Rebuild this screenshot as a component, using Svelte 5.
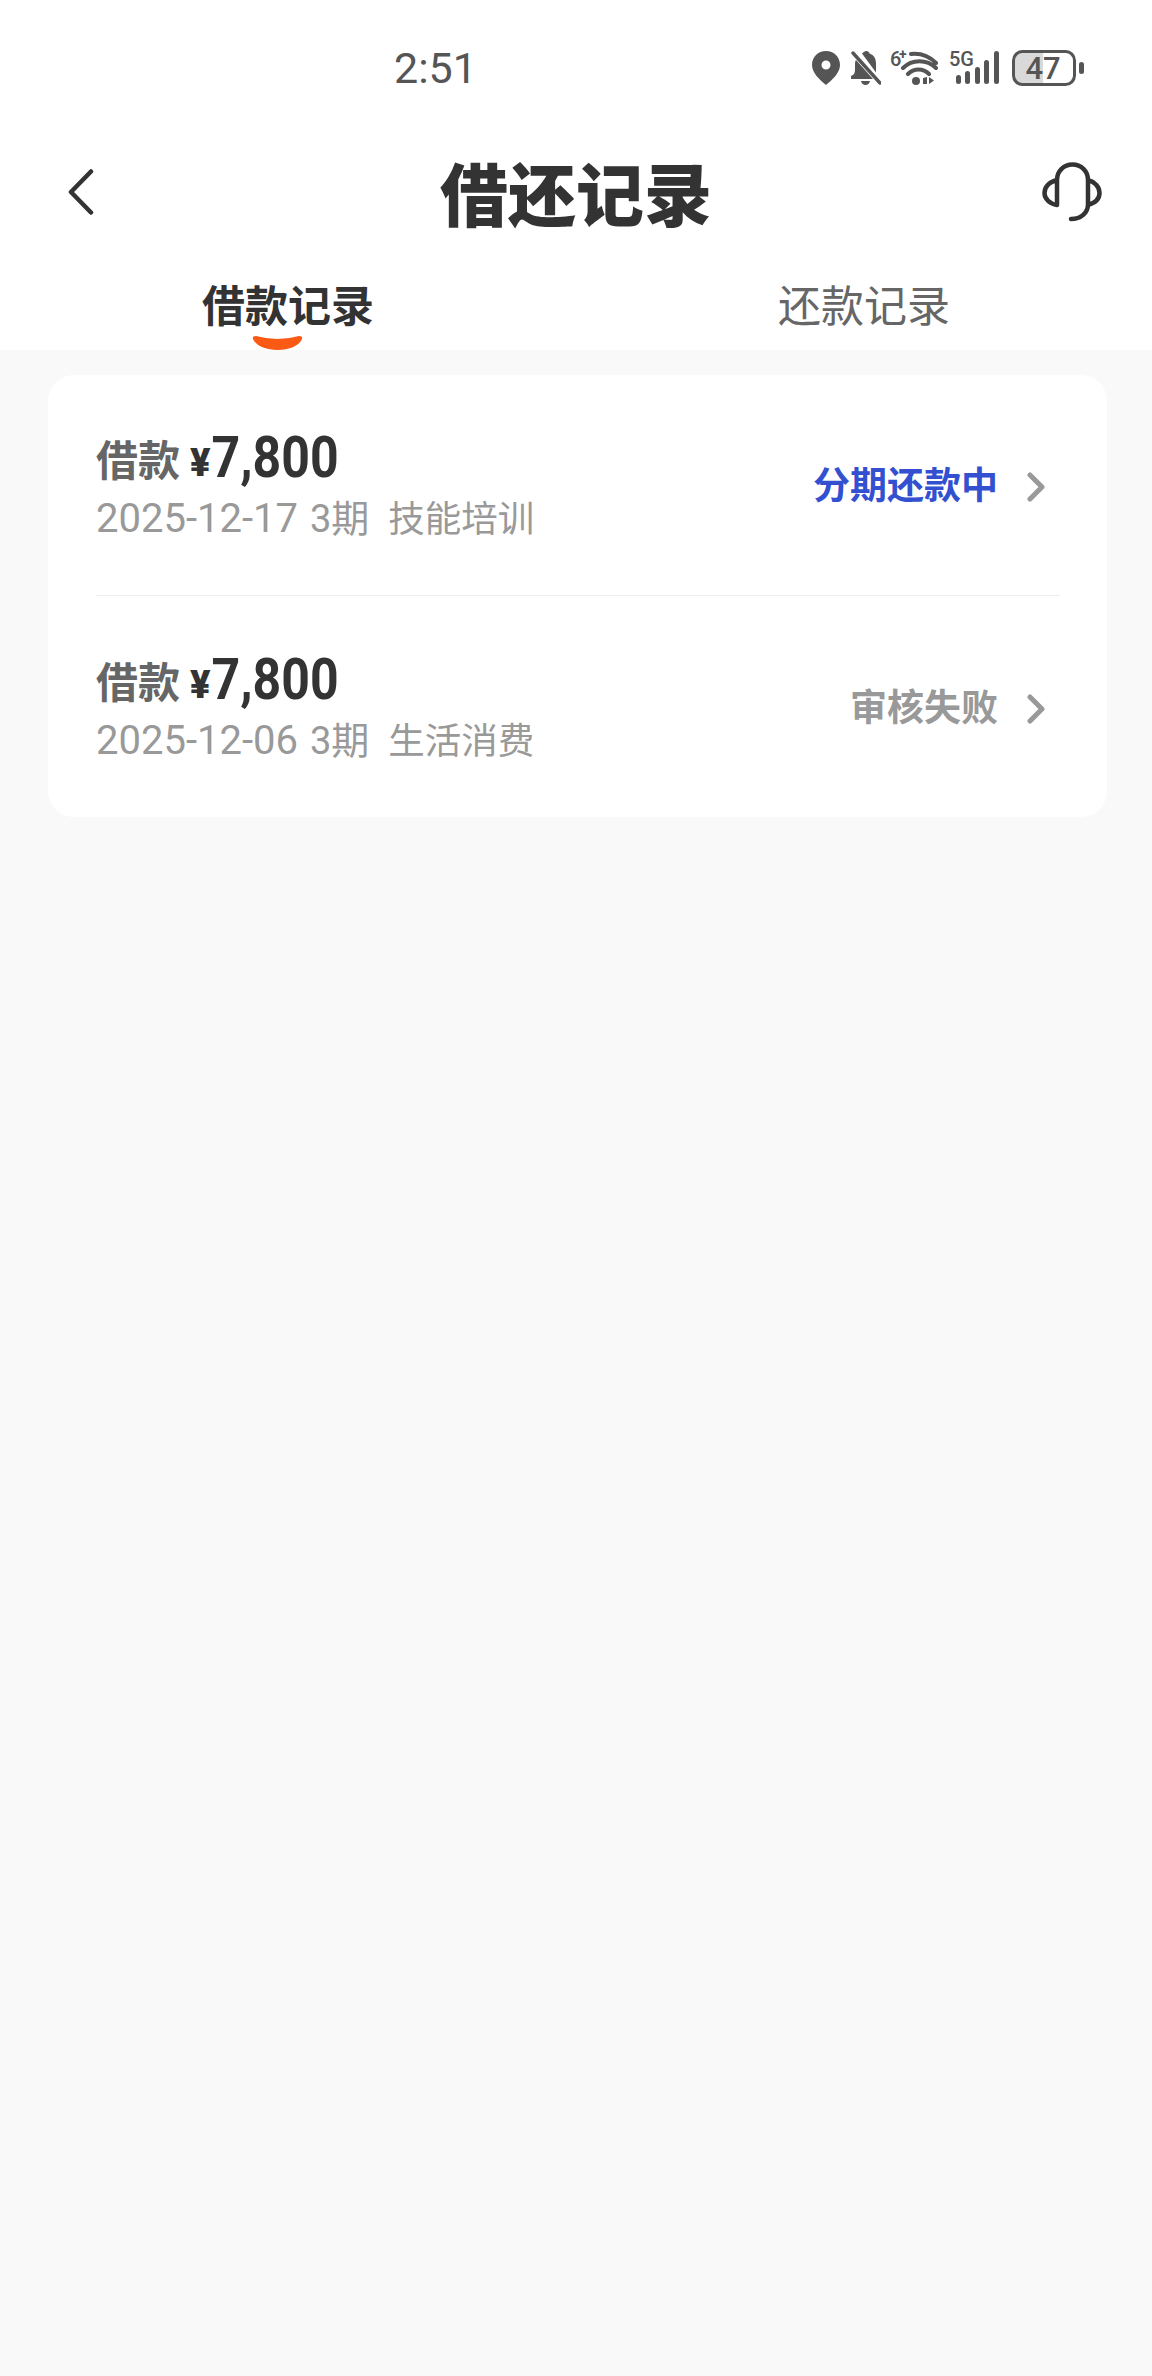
<script>
    const records = [
        { date: "2025-12-17", period: "3期", purpose: "技能培训", status: "分期还款中", active: true },
        { date: "2025-12-06", period: "3期", purpose: "生活消费", status: "审核失败", active: false }
    ];
</script>

<div class="page">
    <header class="top">
        <div class="status-bar">
            <span class="time">2:51</span>
            <div class="status-icons">
                <svg class="ic-pin" viewBox="0 0 28 36" aria-hidden="true">
                    <path fill-rule="evenodd" d="M14 1C6 1 0 7 0 15c0 8 8 15 14 20 6-5 14-12 14-20C28 7 22 1 14 1Zm0 9.500a4.500 4.500 0 1 1 0 9 4.500 4.500 0 0 1 0-9Z" />
                </svg>
                <svg class="ic-bell" viewBox="0 0 30 36" aria-hidden="true">
                    <path d="M5 10 22 29H0v-3c3-1 4-3 4-7v-5c0-2 .3-3 1-4Z" />
                    <path d="M11 3.500c1-1 2.500-2.500 4.500-2.500 1.500 0 2.500 1 3 2.500 4.500 1.500 6.500 5 6.500 10v9L11 3.500Z" />
                    <path d="M10 31h9c-.5 2.500-2.300 4-4.500 4S10.500 33.500 10 31Z" />
                    <path d="M2 3 29 33" stroke="#555" stroke-width="3.400" stroke-linecap="round" />
                </svg>
                <svg class="ic-wifi roomy" viewBox="0 -8 48 44" aria-hidden="true">
                    <text x="0" y="16" class="mini">6</text>
                    <text x="9" y="9" class="mini-plus">+</text>
                    <path d="M21 4c9-1 18 2 25 9M13 18c9-9 24-9 33 0M18 24c6-6 15-6 21 0" fill="none" stroke="#555" stroke-width="4" stroke-linecap="round" />
                    <circle cx="26" cy="31" r="4" />
                    <path d="M33 34v-6l4-1v7ZM39 27l5 3.500-5 3.500Z" />
                </svg>
                <svg class="ic-signal roomy" viewBox="0 -8 50 44" aria-hidden="true">
                    <text x="0" y="16" class="mini">5G</text>
                    <rect x="7" y="25" width="5" height="9" rx="2.500" />
                    <rect x="16" y="21" width="5" height="13" rx="2.500" />
                    <rect x="26" y="17" width="5" height="17" rx="2.500" />
                    <rect x="35" y="10" width="5" height="24" rx="2.500" />
                    <rect x="45" y="1" width="5" height="33" rx="2.500" />
                </svg>
                <svg class="ic-battery" viewBox="0 0 72 36" aria-hidden="true">
                    <path d="M10 2h21v32H10a8 8 0 0 1-8-8V10a8 8 0 0 1 8-8Z" fill="#d9d9d9" />
                    <rect x="1.500" y="1.500" width="61" height="33" rx="9" fill="none" stroke="#555" stroke-width="3" />
                    <text x="31" y="29" class="batt">47</text>
                    <rect x="67" y="12" width="5" height="12" rx="2.500" />
                </svg>
            </div>
        </div>

        <div class="nav">
            <svg class="back" viewBox="0 0 26 46" aria-hidden="true">
                <path d="M23 2.500 3 23l20 20.500" fill="none" stroke="#333" stroke-width="4.500" stroke-linecap="round" stroke-linejoin="round" />
            </svg>
            <h1>借还记录</h1>
            <svg class="headset" viewBox="0 0 60 60" aria-hidden="true">
                <path d="M15 43V18C15 9 22 2.500 30.500 2.500 39 2.500 46 9 46 18V42C46 51 39 57 29 57M15 18C7 20 2.500 25 2.500 31 2.500 37 8 42 15 43M46 18C53 20 57.500 25 57.500 31 57.500 37 53 41 46 43" fill="none" stroke="#333" stroke-width="4.500" stroke-linecap="round" stroke-linejoin="round" />
            </svg>
        </div>

        <div class="tabs">
            <span class="tab on">借款记录</span>
            <span class="tab">还款记录</span>
            <svg class="smile" viewBox="0 0 51 14" aria-hidden="true">
                <path d="M1 3Q0 0 4 0 25.500 6 47 0 51 0 50 3C47 10 37 14 25.500 14 14 14 4 10 1 3Z" />
            </svg>
        </div>
    </header>

    <main class="content">
        <section class="card">
            {#each records as r, i}
                <div class="row" class:first={i === 0}>
                    <div class="info">
                        <div class="amount">
                            <span class="label">借款</span>
                            <span class="yen">¥</span><span class="num">7,800</span>
                        </div>
                        <div class="meta">
                            <span class="date">{r.date}</span>
                            <span class="period">{r.period}</span>
                            <span class="purpose">{r.purpose}</span>
                        </div>
                    </div>
                    <span class="status" class:active={r.active}>{r.status}</span>
                    <svg class="chev" viewBox="0 0 20 30" aria-hidden="true">
                        <path d="M4 3 16 15 4 27" fill="none" stroke="#999" stroke-width="5" stroke-linecap="round" stroke-linejoin="round" />
                    </svg>
                </div>
            {/each}
        </section>
    </main>
</div>

<style>
    :global(body) {
        margin: 0;
        background: #f9f9f9;
    }

    .page {
        min-height: 2376px;
        background: #f9f9f9;
        color: #333;
        font-family: Roboto, "Noto Sans CJK SC", sans-serif;
    }

    .top {
        height: 350px;
        background: #fff;
    }

    .status-bar {
        display: flex;
        align-items: center;
        box-sizing: border-box;
        height: 136px;
        padding: 0 68px 0 394px;
    }

    .time {
        color: #555;
        font-size: 43px;
        font-weight: 400;
        line-height: 1;
    }

    .status-icons {
        display: flex;
        align-items: center;
        margin-left: auto;
        fill: #555;
    }

    .status-icons svg {
        display: block;
        height: 36px;
    }

    /* these two carry small text, the extra 8px on top keeps it inside the svg */
    .status-icons .roomy {
        height: 44px;
        margin-top: -8px;
    }

    .ic-pin {
        width: 28px;
    }

    .ic-bell {
        width: 30px;
        margin-left: 11px;
    }

    .ic-wifi {
        width: 48px;
        margin-left: 9px;
    }

    .ic-signal {
        width: 50px;
        margin-left: 11px;
    }

    .ic-battery {
        width: 72px;
        margin-left: 13px;
    }

    .mini {
        font-size: 20px;
        font-weight: 500;
    }

    .mini-plus {
        font-size: 14px;
        font-weight: 700;
    }

    .batt {
        font-size: 31px;
        font-weight: 500;
        text-anchor: middle;
    }

    .nav {
        display: grid;
        grid-template-columns: 1fr auto 1fr;
        align-items: center;
        height: 114px;
        margin-top: -1px;
        padding: 0 50px;
    }

    .back {
        display: block;
        width: 26px;
        height: 46px;
        margin-left: 18px;
    }

    h1 {
        margin: 0;
        color: #333;
        font-family: "Noto Sans CJK SC", sans-serif;
        font-size: 68px;
        font-weight: 900;
        line-height: 1;
    }

    .headset {
        display: block;
        justify-self: end;
        width: 60px;
        height: 60px;
    }

    .tabs {
        position: relative;
        display: grid;
        grid-template-columns: 1fr 1fr;
        height: 101px;
    }

    .tab {
        display: block;
        padding-top: 28px;
        color: #666;
        font-family: "Noto Sans CJK SC", sans-serif;
        font-size: 43px;
        line-height: 52px;
        text-align: center;
    }

    .tab.on {
        color: #333;
        font-weight: 700;
    }

    .smile {
        position: absolute;
        left: 252px;
        bottom: 0;
        width: 51px;
        height: 14px;
        fill: #fa5a14;
    }

    .content {
        padding: 25px 45px 0 48px;
    }

    .card {
        box-sizing: border-box;
        height: 442px;
        padding: 0 47px 0 48px;
        border-radius: 26px;
        background: #fff;
    }

    .row {
        display: flex;
        align-items: center;
        height: 220px;
    }

    .row + .row {
        height: 221px;
        border-top: 1px solid #eeeeee;
    }

    .info {
        flex: 1 1 auto;
        min-width: 0;
    }

    .amount {
        display: flex;
        align-items: baseline;
        height: 66px;
        line-height: 66px;
    }

    .label {
        color: #666;
        font-family: "Noto Sans CJK SC", sans-serif;
        font-size: 42px;
        font-weight: 700;
    }

    .yen {
        margin-left: 10px;
        color: #333;
        font-size: 38px;
        font-weight: 900;
    }

    .num {
        display: inline-block;
        margin-left: 1px;
        color: #333;
        font-size: 50px;
        font-weight: 700;
        transform: scaleY(1.16);
        transform-origin: 50% 70%;
    }

    .meta {
        display: flex;
        align-items: baseline;
        margin-top: 3px;
        color: #999;
        font-size: 40px;
        line-height: 50px;
    }

    .period {
        margin-left: 12px;
        font-size: 38px;
    }

    .purpose {
        margin-left: 19px;
        font-size: 36.500px;
    }

    .status {
        margin-bottom: 4px;
        color: #999;
        font-family: "Noto Sans CJK SC", sans-serif;
        font-size: 37px;
        font-weight: 700;
    }

    .status.active {
        color: #3350d0;
    }

    .chev {
        display: block;
        flex: 0 0 auto;
        width: 20px;
        height: 30px;
        margin: 4px 14px 0 28px;
    }
</style>
